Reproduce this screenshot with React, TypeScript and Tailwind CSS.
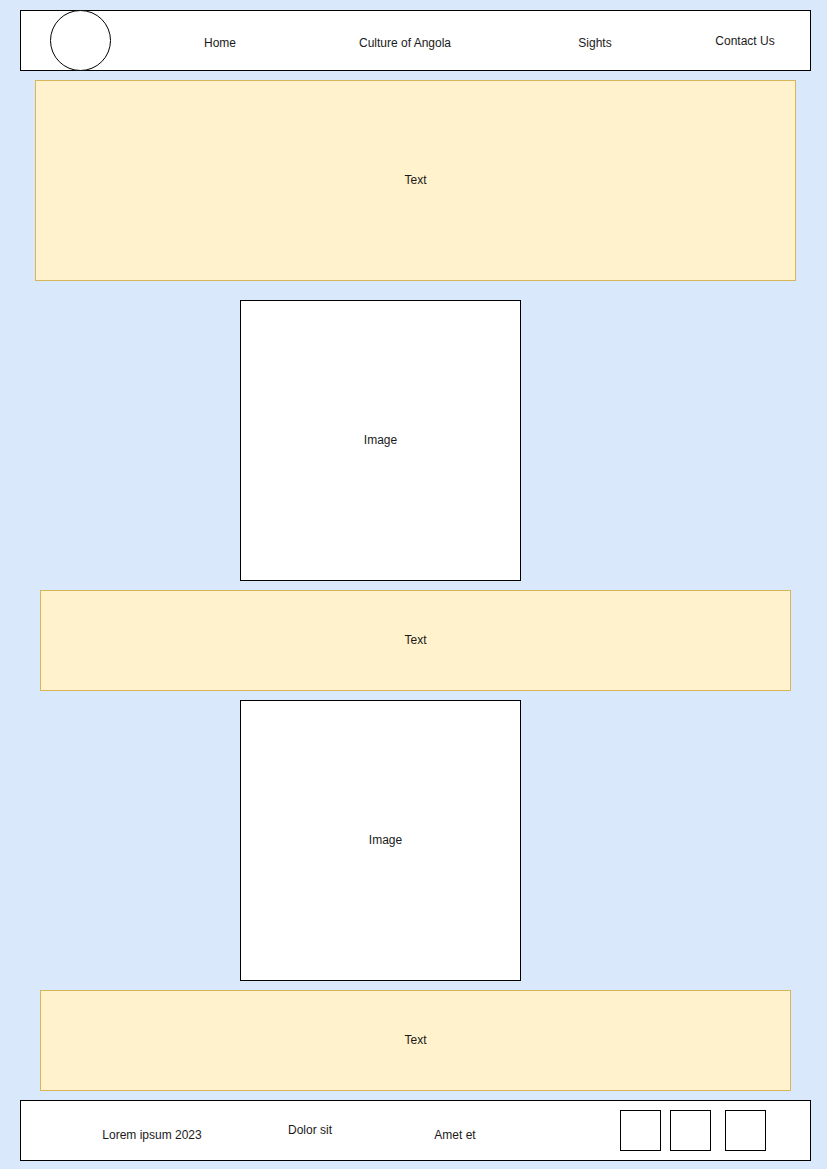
export default function App() {
  return (
    <div className="min-h-[1169px] w-full bg-[#dae8fc] pt-[10px] pb-[8px] text-[12px] leading-[14px] text-[#1a1a1a] font-['Liberation_Sans',Arial,sans-serif]">
      {/* Header */}
      <header className="ml-[20px] flex h-[61px] w-[791px] items-center border border-black bg-white">
        <div className="-my-px ml-[29px] h-[61px] w-[61px] shrink-0 rounded-full border border-black bg-white" />
        <div className="ml-[69px] mt-[4px] w-[80px] text-center">Home</div>
        <div className="ml-[85px] mt-[4px] w-[120px] text-center">Culture of Angola</div>
        <div className="ml-[90px] mt-[4px] w-[80px] text-center">Sights</div>
        <div className="ml-[70px] w-[80px] text-center">Contact Us</div>
      </header>

      <section className="ml-[35px] mt-[9px] flex h-[201px] w-[761px] items-center justify-center border border-[#d6b656] bg-[#fff2cc] pb-[2px]">
        Text
      </section>

      <div className="ml-[240px] mt-[19px] flex h-[281px] w-[281px] items-center justify-center border border-black bg-white pb-[2px]">
        Image
      </div>

      <section className="ml-[40px] mt-[9px] flex h-[101px] w-[751px] items-center justify-center border border-[#d6b656] bg-[#fff2cc] pb-[2px]">
        Text
      </section>

      <div className="ml-[240px] mt-[9px] flex h-[281px] w-[281px] items-center justify-center border border-black bg-white pl-[10px] pb-[2px]">
        Image
      </div>

      <section className="ml-[40px] mt-[9px] flex h-[101px] w-[751px] items-center justify-center border border-[#d6b656] bg-[#fff2cc] pb-[2px]">
        Text
      </section>

      {/* Footer */}
      <footer className="ml-[20px] mt-[9px] flex h-[61px] w-[791px] items-center border border-black bg-white">
        <div className="ml-[71px] mt-[8px] w-[120px] text-center">Lorem ipsum 2023</div>
        <div className="ml-[58px] -mt-[2px] w-[80px] text-center">Dolor sit</div>
        <div className="ml-[65px] mt-[8px] w-[80px] text-center">Amet et</div>
        <div className="ml-[125px] h-[41px] w-[41px] border border-black" />
        <div className="ml-[9px] h-[41px] w-[41px] border border-black" />
        <div className="ml-[14px] h-[41px] w-[41px] border border-black" />
      </footer>
    </div>
  );
}
